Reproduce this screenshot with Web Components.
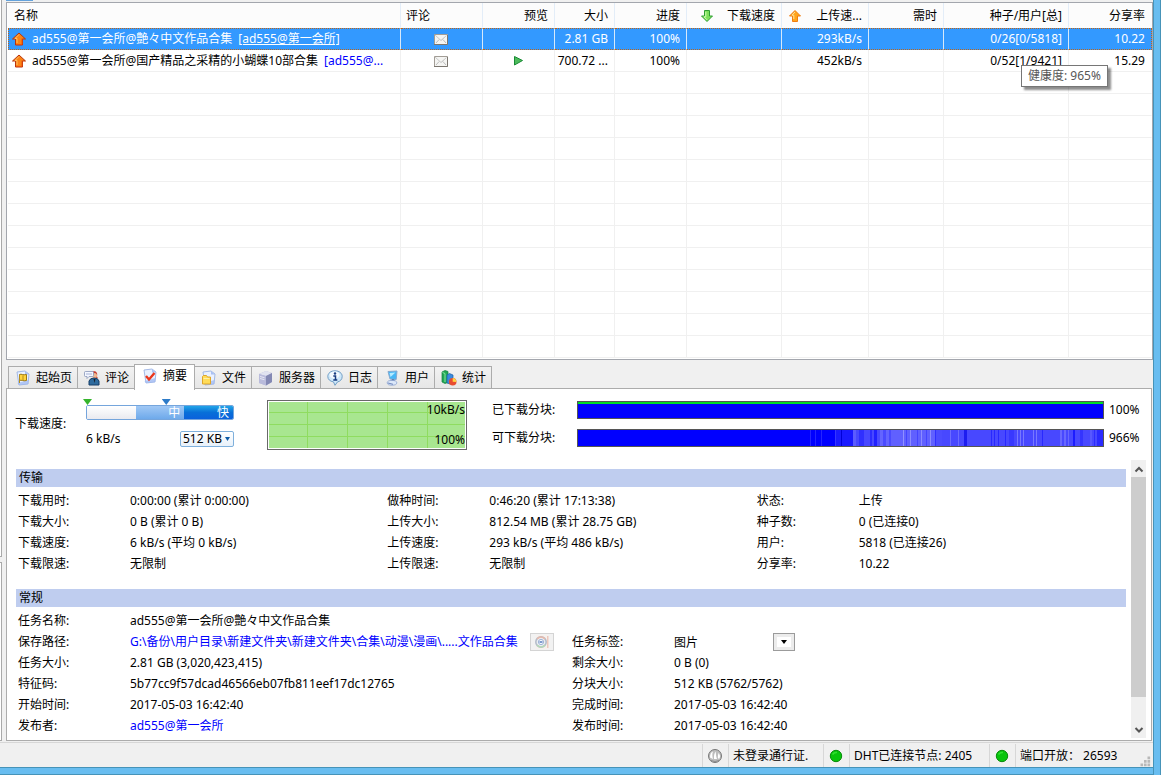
<!DOCTYPE html>
<html lang="zh-CN">
<head>
<meta charset="utf-8">
<title>任务列表</title>
<style>
  html, body { height: 100%; margin: 0; }
  body {
    background: #f0f0f0;
    color: #000;
    font: 12px/20px "Noto Sans", "Noto Sans CJK SC", sans-serif;
  }
</style>
</head>
<body>
<client-window></client-window>

<script>
const RESET = `
  *, *::before, *::after { box-sizing: border-box; }
  button, input, select { font: inherit; color: inherit; margin: 0; }
  a { color: #0000ff; text-decoration: none; }
`;

function define(name, markup, setup) {
  const template = document.createElement('template');
  template.innerHTML = markup;
  customElements.define(name, class extends HTMLElement {
    constructor() {
      super();
      const root = this.attachShadow({ mode: 'open' });
      root.innerHTML = `<style>${RESET}</style>`;
      root.append(template.content.cloneNode(true));
    }
    connectedCallback() {
      if (setup && !this.ready) { this.ready = true; setup(this, this.shadowRoot); }
    }
  });
}

/* ---------- icons ---------- */
const page = `<path d="M2 2l8-1 4 3-1 10-9 1z" fill="#e9f1ff" stroke="#8fa9e0" stroke-width=".8"/><path d="M10 1v3.500h4z" fill="#a9c0f3"/><path d="M2.500 13l11-3-.5 4-9 1z" fill="#9fb8f2" opacity=".75"/>`;
const ICONS = {
  up: `<path d="M8 2l6.500 6h-3v6h-7V8h-3z" fill="#fb8315" stroke="#b8330c" stroke-linejoin="round"/><path d="M8 3.500L4 7.500h2V12" fill="none" stroke="#ffbe63"/><path d="M11 7.500v6H5" fill="none" stroke="#e8500c"/>`,
  upHead: `<path d="M8 2.500l5.500 5.500h-3v5.500h-5V8h-3z" fill="#ffa51c" stroke="#f07c10" stroke-linejoin="round"/><path d="M8 4L5 7.200h1.800V11" fill="none" stroke="#ffe29a"/>`,
  downHead: `<path d="M8 13.500L2.500 8h3V2.500h5V8h3z" fill="#7de05b" stroke="#2f9e32" stroke-linejoin="round"/><path d="M6.800 3.800v5H5L8 11.800" fill="none" stroke="#d0ffb0"/>`,
  mail: `<path d="M1.500 3.500h13v10h-13z" fill="#f5f5f3" stroke="#a29d96"/><path d="M1 13.500h13.500V4" fill="none" stroke="#7b766f"/><path d="M2.500 4.500L8 9.500l5.500-5M3 12l3.300-3.700M13 12L9.700 8.300" fill="none" stroke="#a9a9a9" stroke-dasharray="1 .5"/>`,
  play: `<path d="M4.500 3.500l8 4-8 4.500z" fill="#4dbb5b" stroke="#188a35" stroke-linejoin="round"/>`,
  start: page + `<path d="M4.500 4.500c2-1 3.500 1 7 0v6c-3.500 1-5-1-7 0z" fill="#ffd43e" stroke="#9b7812"/><path d="M4.500 5v8M8 5.300v5" stroke="#b58d19"/>`,
  chat: `<path d="M8 1.500c4-1 6 1 5 5l1 2h-4z" fill="#c43c30"/><circle cx="10.500" cy="5.500" r="2.500" fill="#f2b68d"/><path d="M5 15V11q1-3 5-3t5 3v4z" fill="#2e6b9e" stroke="#163f68"/><path d="M9.500 9l1 4 1-4" fill="#17202e"/><path d="M1.500 1.500h7q1 0 1 1v3q0 1-1 1H5L3 8.500v-2H1.500q-1 0-1-1v-3q0-1 1-1" fill="#f3f6ff" stroke="#8796b9" stroke-width=".8"/><path d="M2.500 4h1M4.500 4h1M6.500 4h1" stroke="#5870ad"/>`,
  summary: page + `<path d="M4 8l3 3.500L12.500 5" fill="none" stroke="#e9371d" stroke-width="2.400"/>`,
  file: page + `<path d="M1.500 6.500l1-1h3l1 1.500h3v7h-8z" fill="#ffdc59" stroke="#dfa629"/><path d="M2.500 8.500h6" stroke="#fff0a6"/>`,
  server: `<path d="M1 4l7-3 6 2v9l-6 3.500L1 13z" fill="#b6b8d7"/><path d="M1 4l7-3 6 2-6 3z" fill="#e1e3f0"/><path d="M8 6l6-3v9l-6 3.500z" fill="#8489b4"/><path d="M1 4l7 2v9.500L1 13z" fill="#b9bbdb"/><path d="M2 6.500l4.500 1.200M2 8.500l4.500 1.200" stroke="#e7e8f4"/>`,
  log: `<path d="M8 .8c4.200 0 7.200 2.400 7.200 5.700 0 3-2.200 5-4.700 5.400L8 15.300l-1.500-3.400C3 11.400.8 9.300.8 6.500.8 3.200 3.800.8 8 .8z" fill="#cfe8fa" stroke="#6595bf" stroke-width=".9"/><ellipse cx="7.500" cy="5" rx="5" ry="3.400" fill="#f4fbff"/><circle cx="8" cy="3.500" r="1.200" fill="#173c80"/><path d="M6.300 6H8.500v4M6.300 10h4" fill="none" stroke="#173c80" stroke-width="1.500"/>`,
  user: `<path d="M4 1.500L13 1l-.8 8.500L6 9z" fill="#46b7f6" stroke="#87a9d0"/><path d="M5.500 3l6-.5L6.500 7z" fill="#b3eaff"/><path d="M8 9l2 .3 1 2-4 .2z" fill="#5e7ca9"/><ellipse cx="8" cy="12.800" rx="4.800" ry="2.400" fill="#dbe7f9" stroke="#8ba2cf" stroke-width=".8"/><path d="M4 13l5 1.300" stroke="#7088bd"/>`,
  stats: `<path d="M1 2l3-1.500 3 1v11l-3 1-3-1.500z" fill="#22a756" stroke="#12803c" stroke-width=".7"/><path d="M1.500 2.500L4 3.500V12" fill="none" stroke="#88e5a0"/><path d="M6 5l2.500-1.500L12 5v8l-3 1-3-1z" fill="#3b8bdd" stroke="#1b5eab" stroke-width=".7"/><circle cx="11.700" cy="11.700" r="3.800" fill="#e84c31"/><path d="M11.700 11.700V8a3.800 3.800 0 0 1 3.700 4z" fill="#ffd441"/>`,
  disc: `<rect x="2" y="1" width="12" height="14" fill="#f7f1ed"/><path d="M13 2v12h1.500V2z" fill="#edc8bd"/><circle cx="7" cy="8" r="5.200" fill="#e9edf2" stroke="#b5bdc9" stroke-width="1.600"/><path d="M3 5q4-4 8 0" fill="none" stroke="#e8b8aa" stroke-width="1.400"/><path d="M3 11q4 4 8 0" fill="none" stroke="#b5d8b6" stroke-width="1.400"/><circle cx="7" cy="8" r="2.600" fill="#f8fbff" stroke="#9db2d6"/><path d="M5.500 8h3" stroke="#4a72b8" stroke-width="1.400"/>`,
  pass: `<circle cx="8" cy="8" r="6.500" fill="#bdbdbd" stroke="#777"/><path d="M3 9.500C3 6 4 4 6 3.500 5 6 5.300 8 6 11zM7 11c-.3-3 .3-6 1.700-7.500.3 3 .3 5 1.300 7.500zM11 10.500c-.3-2 0-4 .6-5.500 1.600 2 1.700 3.500.9 5.500z" fill="#fff"/><path d="M4 12.500q4 2 8 0" stroke="#8d8d8d" fill="none"/>`,
  online: `<circle cx="8" cy="8" r="5.700" fill="#08c40c" stroke="#078b0a"/><path d="M4.500 6.500q1.500-2.300 4.500-2" fill="none" stroke="#30e030" stroke-width="1.500"/>`,
  chevronUp: `<path d="M4.500 10.500L8 7l3.500 3.500" fill="none" stroke="#555" stroke-width="2"/>`,
  chevronDown: `<path d="M4.500 6L8 9.500 11.500 6" fill="none" stroke="#555" stroke-width="2"/>`,
  grip: `<path d="M12 4h3v3h-3zM12 8h3v3h-3zM12 12h3v3h-3zM8 8h3v3H8zM8 12h3v3H8zM4 12h3v3H4z" fill="#b8b8b8"/>`
};
define('client-icon', `
  <style>
    :host { display: inline-block; flex: none; width: 16px; height: 16px; }
    svg { display: block; width: 100%; height: 100%; }
  </style>
  <svg viewBox="0 0 16 16" aria-hidden="true"></svg>`,
  (el, root) => { root.querySelector('svg').innerHTML = ICONS[el.getAttribute('name')]; });

/* ---------- task list ---------- */
define('task-list', `
  <style>
    :host { display: block; background: #fff; border: 1px solid #a3a6ad; padding: 0 0 1px 1px; }
    table { width: 100%; border-collapse: separate; border-spacing: 0; table-layout: fixed; }
    th, td { height: 22px; padding: 0 6px 0 0; border-right: 1px solid #f0f0f0; border-bottom: 1px solid #f0f0f0;
      font-weight: 400; text-align: right; white-space: nowrap; line-height: 20px; }
    th { height: 25px; padding-top: 2px; background: #fcfcfc; border-color: #e3edf8; border-bottom-color: #fcfcfc; }
    th:first-child, td:first-child { text-align: left; padding-left: 6px; overflow: hidden; }
    th:nth-child(2) { text-align: left; padding-left: 5px; }
    td:nth-child(2), td:nth-child(3) { text-align: center; padding: 0 2px 0 0; }
    td:last-child, th:last-child { border-right-color: transparent; }
    .line { display: flex; align-items: center; }
    .line client-icon { margin-right: 5px; margin-left: -3px; }
    .line a { margin-left: 6px; }
    .split { display: flex; align-items: center; justify-content: space-between; padding-left: 12px; }
    .split.near { padding-left: 5px; }
    td > client-icon { display: block; margin: 0 auto; }
    .selected td { background: #3399ff; color: #fff; border-top: 1px dotted #bd6418; border-bottom: 1px dotted #bd6418; border-right-color: #d7e9fa; }
    .selected td:first-child { border-left: 1px dotted #bd6418; padding-left: 5px; }
    .selected td:last-child { border-right: 1px dotted #bd6418; }
    .selected a { color: #fff; text-decoration: underline; }
    .health { position: relative; }
    .tip { position: absolute; z-index: 1; left: 77px; top: 15px; height: 22px; padding: 0 6px; background: #fff;
      border: 1px solid #767676; color: #575757; box-shadow: 3px 3px 2px rgba(0,0,0,.45); }
  </style>
  <table>
    <colgroup>
      <col><col style="width:82px"><col style="width:72px"><col style="width:60px"><col style="width:72px">
      <col style="width:95px"><col style="width:87px"><col style="width:75px"><col style="width:125px"><col style="width:83px">
    </colgroup>
    <thead>
      <tr>
        <th>名称</th><th>评论</th><th>预览</th><th>大小</th><th>进度</th>
        <th><div class="split"><client-icon name="downHead"></client-icon><span>下载速度</span></div></th>
        <th><div class="split near"><client-icon name="upHead"></client-icon><span>上传速...</span></div></th>
        <th>需时</th><th>种子/用户[总]</th><th>分享率</th>
      </tr>
    </thead>
    <tbody>
      <tr class="selected">
        <td><div class="line"><client-icon name="up"></client-icon><span>ad555@第一会所@艶々中文作品合集</span><a href="#">[ad555@第一会所]</a></div></td>
        <td><client-icon name="mail"></client-icon></td><td></td><td>2.81 GB</td><td>100%</td><td></td>
        <td>293kB/s</td><td></td><td>0/26[0/5818]</td><td>10.22</td>
      </tr>
      <tr>
        <td><div class="line"><client-icon name="up"></client-icon><span>ad555@第一会所@国产精品之采精的小蝴蝶10部合集</span><a href="#">[ad555@...</a></div></td>
        <td><client-icon name="mail"></client-icon></td><td><client-icon name="play"></client-icon></td><td>700.72 ...</td><td>100%</td><td></td>
        <td>452kB/s</td><td></td><td class="health">0/52[1/9421]<div class="tip" role="tooltip">健康度: 965%</div></td><td>15.29</td>
      </tr>
    </tbody>
  </table>`,
  (el, root) => {
    const body = root.querySelector('tbody');
    for (let i = 0; i < 13; i++) {
      const row = body.insertRow();
      for (let c = 0; c < 10; c++) row.insertCell();
    }
  });

/* ---------- tabs ---------- */
define('client-tab', `
  <style>
    :host { display: block; margin-right: -1px; }
    button { display: flex; align-items: center; gap: 5px; height: 23px; padding: 0 5px 0 6px; white-space: nowrap;
      border: 1px solid #acacac; border-bottom: 0; background: linear-gradient(#f2f2f2, #e6e6e6); }
    :host([selected]) { position: relative; }
    :host([selected]) button { height: 26px; padding: 0 7px 3px; background: #fff; }
  </style>
  <button role="tab"><client-icon></client-icon><slot></slot></button>`,
  (el, root) => {
    const icon = document.createElement('client-icon');
    icon.setAttribute('name', el.getAttribute('icon'));
    root.querySelector('client-icon').replaceWith(icon);
    root.querySelector('button').setAttribute('aria-selected', el.hasAttribute('selected'));
  });
define('client-tabs', `
  <style>:host { display: flex; align-items: flex-end; height: 25px; padding-left: 2px; margin-bottom: -1px; }
    ::slotted([selected]) { margin-bottom: -1px; z-index: 1; }</style>
  <slot></slot>`);

/* ---------- speed ---------- */
define('speed-slider', `
  <style>
    :host { display: grid; grid-template-rows: 6px 15px; width: 148px; }
    .marks { position: relative; height: 6px; }
    .current { position: absolute; left: -3px; top: 0; width: 9px; height: 6px; background: #35b42c; clip-path: polygon(0 0, 100% 0, 50% 100%); }
    input { display: block; width: 100%; height: 6px; padding: 0; background: none; -webkit-appearance: none; appearance: none; }
    input::-webkit-slider-runnable-track { height: 6px; background: none; }
    input::-webkit-slider-thumb { -webkit-appearance: none; width: 9px; height: 6px; background: #2d7bc8; clip-path: polygon(0 0, 100% 0, 50% 100%); }
    .track { display: grid; grid-template-columns: repeat(3, 1fr); border: 1px solid #75a5dc; border-radius: 2px; color: #fff; text-align: right; line-height: 14px; overflow: hidden; }
    .track span { padding-right: 4px; }
    .low { background: linear-gradient(#fff, #e8e8ee); }
    .mid { background: linear-gradient(#a0c8f5, #6aa7ea); }
    .high { background: linear-gradient(#22a5e8, #0870d8 45%, #0b5edd); }
  </style>
  <div class="marks"><div class="current"></div><input type="range" min="0" max="1000" value="545" aria-label="下载速度"></div>
  <div class="track"><span class="low"></span><span class="mid">中</span><span class="high">快</span></div>`);

define('speed-graph', `
  <style>
    :host { display: flex; flex-direction: column; justify-content: space-between; align-items: flex-end; width: 200px; height: 50px;
      border: 1px solid #696969; padding: 0 1px 0 0; line-height: 18px;
      background:
        repeating-linear-gradient(90deg, transparent 0 39px, #8fdc60 39px 40px),
        repeating-linear-gradient(transparent 0 11px, #8fdc60 11px 12px), #a8e690;
      box-shadow: inset 0 0 0 1px #fff; }
  </style>
  <span>10kB/s</span><span>100%</span>`);

/* Runs of piece availability: [start, width, colour]. */
const RUNS = [
  [232,1,'#2424ff'],[237,1,'#2424ff'],[243,1,'#2424ff'],[257,1,'#3636ff'],[258,5,'#1a1aff'],[263,12,'#1a1aff'],[263,1,'#0000d8'],
  [275,250,'#4848ff'],[275,3,'#5c5cff'],[281,5,'#3030ff'],[292,2,'#2c2cff'],[296,3,'#2020ff'],[299,40,'#4a4aff'],
  [302,3,'#6464ff'],[308,3,'#6464ff'],[313,44,'#6060ff'],[325,1,'#9090ff'],[328,1,'#4444ff'],[332,1,'#8c8cff'],[339,1,'#4444ff'],
  [343,1,'#8c8cff'],[348,1,'#4444ff'],[352,1,'#8c8cff'],[357,1,'#3030ff'],[358,6,'#4c4cff'],[372,1,'#6c6cff'],[380,1,'#6c6cff'],
  [386,3,'#1c1cf0'],[413,1,'#2828ff'],[416,1,'#2828ff'],[420,1,'#2828ff'],[427,1,'#2828ff'],[431,5,'#3838ff'],[439,1,'#7878ff'],
  [442,1,'#7878ff'],[445,1,'#7878ff'],[455,1,'#7878ff'],[458,1,'#7878ff'],[464,1,'#2828ff'],[482,2,'#6868ff'],[486,2,'#6868ff'],
  [490,1,'#6868ff'],[495,2,'#1c1cff'],[502,3,'#3434ff'],[512,2,'#5858ff'],[516,1,'#2c2cff'],[519,6,'#2a2aff']
];
define('piece-bar', `
  <style>
    :host { display: grid; grid-template-columns: 85px 1fr 38px; align-items: center; }
    svg { display: block; width: 100%; height: 18px; border: 1px solid #555; background: #0000ff; }
    output { padding-left: 5px; }
  </style>
  <slot></slot>
  <svg viewBox="0 0 525 16" preserveAspectRatio="none" shape-rendering="crispEdges" aria-hidden="true"></svg>
  <output></output>`,
  (el, root) => {
    root.querySelector('output').textContent = el.getAttribute('value');
    root.querySelector('svg').innerHTML = el.hasAttribute('availability')
      ? RUNS.map(([x, w, c]) => `<rect x="${x}" y="0" width="${w}" height="16" fill="${c}"/>`).join('')
      : '<rect width="525" height="2" fill="#00dc28"/>';
  });

define('speed-panel', `
  <style>
    :host { display: grid; grid-template-columns: 71px 148px 200px 1fr; padding: 10px 9px 0 8px; height: 71px; }
    .name { padding-top: 15px; }
    .rate { display: flex; justify-content: space-between; align-items: center; margin-top: 9px; }
    .pick { display: grid; width: 54px; }
    .pick > * { grid-area: 1 / 1; }
    select { -webkit-appearance: none; appearance: none; width: 54px; height: 16px; padding: 0 0 0 2px; border: 1px solid #7fb0dc; border-radius: 2px; background: linear-gradient(#fff, #e8f1fa); line-height: 14px; outline: 0; }
    .pick svg { width: 5px; height: 4px; justify-self: end; align-self: center; margin-right: 4px; pointer-events: none; }
    speed-graph { margin-left: 33px; margin-top: 1px; }
    .bars { display: grid; grid-template-rows: 28px 28px; padding-left: 58px; align-content: start; margin-top: -3px; }
  </style>
  <div class="name">下载速度:</div>
  <div>
    <speed-slider></speed-slider>
    <div class="rate"><span>6 kB/s</span>
      <div class="pick"><select aria-label="限速"><option>512 KB</option></select><svg viewBox="0 0 5 4" aria-hidden="true"><path d="M0 0h5L2.500 4z" fill="#0b5aa6"/></svg></div>
    </div>
  </div>
  <speed-graph></speed-graph>
  <div class="bars">
    <piece-bar value="100%">已下载分块:</piece-bar>
    <piece-bar value="966%" availability>可下载分块:</piece-bar>
  </div>`);

/* ---------- details ---------- */
define('info-section', `
  <style>
    :host { display: block; margin-bottom: 15px; }
    h2 { margin: 0 0 3px; padding-left: 3px; height: 18px; font: inherit; line-height: 18px; background: #bfcdef; }
    .columns { display: grid; grid-auto-flow: column; grid-auto-columns: minmax(0, 1fr); padding-left: 2px; }
  </style>
  <h2></h2><div class="columns"><slot></slot></div>`,
  (el, root) => { root.querySelector('h2').textContent = el.getAttribute('heading'); });

define('info-column', `
  <style>:host { display: block; }</style><slot></slot>`);

define('info-row', `
  <style>
    :host { display: flex; height: 21px; line-height: 21px; white-space: nowrap; }
    .label { flex: none; width: var(--label, 102px); }
    .value { display: flex; align-items: center; }
  </style>
  <span class="label"></span><span class="value"><slot></slot></span>`,
  (el, root) => { root.querySelector('.label').textContent = el.getAttribute('label') + ':'; });

define('tag-picker', `
  <style>
    :host { display: grid; width: 121px; align-items: center; }
    select, span { grid-area: 1 / 1; }
    select { -webkit-appearance: none; appearance: none; width: 100%; height: 20px; padding: 0; border: 0; background: none; }
    span { justify-self: end; width: 22px; height: 18px; border: 1px solid #9b9b9b; background: #fff; box-shadow: inset 0 0 0 3px #ececec; pointer-events: none; }
    svg { display: block; margin: 6px auto 0; }
  </style>
  <select aria-label="任务标签"><option>图片</option></select>
  <span><svg width="6" height="4" viewBox="0 0 6 4"><path d="M0 0h6L3 4z"/></svg></span>`);

define('scroll-rail', `
  <style>
    :host { display: flex; flex-direction: column; width: 15px; background: #f0f0f0; }
    button { height: 17px; padding: 0; border: 0; background: none; display: grid; place-items: center; }
    .room { flex: 1; }
    .thumb { height: 90%; background: #cdcdcd; }
  </style>
  <button aria-label="向上"><client-icon name="chevronUp"></client-icon></button>
  <div class="room"><div class="thumb"></div></div>
  <button aria-label="向下"><client-icon name="chevronDown"></client-icon></button>`);

define('task-details', `
  <style>
    :host { display: grid; grid-template-columns: 1fr 15px; column-gap: 5px; padding: 0 5px 2px 9px; flex: 1; }
    .body { padding-top: 9px; }
    .body info-section:last-child { margin-bottom: 0; }
    .first { --label: 112px; }
    .disc { display: grid; place-items: center; width: 24px; height: 18px; margin-left: 12px; padding: 0; border: 1px solid #d4d4d4; background: #f2f2f2; }
  </style>
  <div class="body">
    <info-section heading="传输">
      <info-column class="first">
        <info-row label="下载用时">0:00:00 (累计 0:00:00)</info-row>
        <info-row label="下载大小">0 B (累计 0 B)</info-row>
        <info-row label="下载速度">6 kB/s (平均 0 kB/s)</info-row>
        <info-row label="下载限速">无限制</info-row>
      </info-column>
      <info-column>
        <info-row label="做种时间">0:46:20 (累计 17:13:38)</info-row>
        <info-row label="上传大小">812.54 MB (累计 28.75 GB)</info-row>
        <info-row label="上传速度">293 kB/s (平均 486 kB/s)</info-row>
        <info-row label="上传限速">无限制</info-row>
      </info-column>
      <info-column>
        <info-row label="状态">上传</info-row>
        <info-row label="种子数">0 (已连接0)</info-row>
        <info-row label="用户">5818 (已连接26)</info-row>
        <info-row label="分享率">10.22</info-row>
      </info-column>
    </info-section>
    <info-section heading="常规">
      <info-column class="first">
        <info-row label="任务名称">ad555@第一会所@艶々中文作品合集</info-row>
        <info-row label="保存路径"><a href="#">G:\\备份\\用户目录\\新建文件夹\\新建文件夹\\合集\\动漫\\漫画\\.....文作品合集</a><button class="disc" aria-label="打开" disabled><client-icon name="disc"></client-icon></button></info-row>
        <info-row label="任务大小">2.81 GB (3,020,423,415)</info-row>
        <info-row label="特征码">5b77cc9f57dcad46566eb07fb811eef17dc12765</info-row>
        <info-row label="开始时间">2017-05-03 16:42:40</info-row>
        <info-row label="发布者"><a href="#">ad555@第一会所</a></info-row>
      </info-column>
      <info-column>
        <info-row style="visibility:hidden" label=""></info-row>
        <info-row label="任务标签"><tag-picker></tag-picker></info-row>
        <info-row label="剩余大小">0 B (0)</info-row>
        <info-row label="分块大小">512 KB (5762/5762)</info-row>
        <info-row label="完成时间">2017-05-03 16:42:40</info-row>
        <info-row label="发布时间">2017-05-03 16:42:40</info-row>
      </info-column>
    </info-section>
  </div>
  <scroll-rail></scroll-rail>`);

/* ---------- status bar ---------- */
define('status-strip', `
  <style>
    :host { display: grid; grid-template-columns: 1fr 26px 95px 26px 140px 26px 122px 16px; height: 25px; margin-top: 1px; padding-top: 1px; border-top: 1px solid #d7d7d7; background: #f0f0f0; }
    span { display: flex; align-items: center; margin: 0; border-left: 1px solid #d7d7d7; padding-left: 4px; white-space: nowrap; }
    span:first-of-type { border: 0; }
    client-icon { align-self: center; }
    client-icon[name=grip] { align-self: end; width: 14px; height: 14px; }
  </style>
  <span></span>
  <span><client-icon name="pass"></client-icon></span><span>未登录通行证.</span>
  <span><client-icon name="online"></client-icon></span><span>DHT已连接节点: 2405</span>
  <span><client-icon name="online"></client-icon></span><span>端口开放： 26593</span>
  <client-icon name="grip"></client-icon>`);

/* ---------- window ---------- */
define('client-window', `
  <style>
    :host { display: grid; grid-template-columns: 6px minmax(0, 1fr) 8px; grid-template-rows: 1fr auto 8px; min-height: 100vh; }
    .side { display: grid; grid-template-rows: 1fr 179px; row-gap: 5px; padding-right: 4px; }
    .side div { background: #fff; border-right: 1px solid #a9a9a9; border-bottom: 1px solid #a9a9a9; }
    .side div + div { border-top: 1px solid #a9a9a9; }
    main { display: flex; flex-direction: column; }
    .above { height: 2px; }
    .above::before { content: ""; display: block; width: 27px; height: 1px; background: #63a2dc; }
    client-tabs { margin-top: 4px; }
    .panel { flex: 1; display: flex; flex-direction: column; background: #fff; border: 1px solid #acacac; margin-right: 1px; }
    .edge { grid-area: 1 / 3 / 4 / 4; background: #68bdf0; border-left: 1px solid #4693b8; border-right: 1px solid #4693b8; }
    .foot { grid-area: 3 / 1 / 4 / 3; background: #68bdf0; border-top: 1px solid #4693b8; border-bottom: 1px solid #4693b8; }
    status-strip { grid-area: 2 / 1 / 3 / 3; }
  </style>
  <div class="side"><div></div><div></div></div>
  <main>
    <div class="above"></div>
    <task-list></task-list>
    <client-tabs role="tablist">
      <client-tab icon="start">起始页</client-tab>
      <client-tab icon="chat">评论</client-tab>
      <client-tab icon="summary" selected>摘要</client-tab>
      <client-tab icon="file">文件</client-tab>
      <client-tab icon="server">服务器</client-tab>
      <client-tab icon="log">日志</client-tab>
      <client-tab icon="user">用户</client-tab>
      <client-tab icon="stats">统计</client-tab>
    </client-tabs>
    <section class="panel">
      <speed-panel></speed-panel>
      <task-details></task-details>
    </section>
  </main>
  <status-strip></status-strip>
  <div class="edge"></div>
  <div class="foot"></div>`);
</script>
</body>
</html>
